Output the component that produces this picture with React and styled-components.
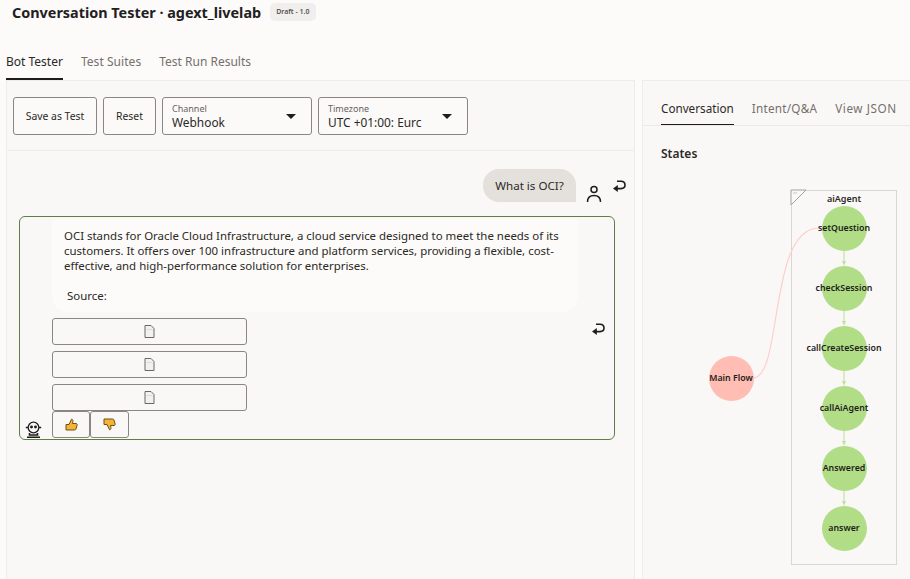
import React from "react";
import styled, { createGlobalStyle } from "styled-components";

const GlobalStyle = createGlobalStyle`
    html, body {
        margin: 0;
        padding: 0;
        background: #fcfbfa;
        font-family: "Noto Sans", "Liberation Sans", sans-serif;
        color: #2b2926;
    }
`;

const Page = styled.div`
    width: 910px;
    height: 579px;
    overflow: hidden;
    display: flex;
    flex-direction: column;
`;

const Header = styled.header`
    height: 24px;
    padding-left: 12px;
    display: flex;
    align-items: center;
    gap: 9px;
`;

const Title = styled.h1`
    margin: 0;
    font-size: 14.4px;
    font-weight: 700;
    color: #22201d;
`;

const Badge = styled.span`
    padding: 0 6px;
    height: 18px;
    line-height: 18px;
    border-radius: 5px;
    background: #f1efed;
    font-size: 7px;
    font-weight: 600;
    color: #57534e;
`;

const TabBar = styled.nav`
    display: flex;
    gap: 18px;
    height: ${(p) => p.$height}px;
    padding-left: ${(p) => p.$left}px;
    margin-top: ${(p) => p.$top || 0}px;
    align-items: flex-end;
    border-bottom: ${(p) => (p.$ruled ? "1px solid #ebe9e6" : "none")};
`;

const Tab = styled.div`
    padding-bottom: 8px;
    font-size: ${(p) => p.$size}px;
    letter-spacing: ${(p) => p.$spacing || 0}px;
    line-height: 16px;
    color: ${(p) => (p.$active ? "#2b2926" : "#74706b")};
    border-bottom: ${(p) => p.$line}px solid ${(p) => (p.$active ? "#1f1d1b" : "transparent")};
`;

const Main = styled.main`
    flex: 1;
    display: flex;
    gap: 7px;
    padding-left: 6px;
    min-height: 0;
`;

const TesterPanel = styled.section`
    width: 629px;
    background: #f9f8f6;
    border: 1px solid #efedea;
    border-bottom: none;
    box-sizing: border-box;
    display: flex;
    flex-direction: column;
`;

const Toolbar = styled.div`
    height: 70px;
    box-sizing: border-box;
    padding: 16px 6px 0;
    display: flex;
    gap: 6px;
    border-bottom: 1px solid #efedea;
`;

const Button = styled.button`
    width: ${(p) => p.$width}px;
    height: 38px;
    padding: 0;
    background: #fbfaf8;
    border: 1px solid #8a8782;
    border-radius: 3px;
    font-family: inherit;
    font-size: 10.4px;
    color: #2b2926;
`;

const Select = styled.div`
    width: ${(p) => p.$width}px;
    height: 38px;
    box-sizing: border-box;
    padding: 5px 15px 0 9px;
    background: #fbfaf8;
    border: 1px solid #8a8782;
    border-radius: 3px;
    display: flex;
    justify-content: space-between;
    overflow: hidden;
`;

const SelectText = styled.div`
    display: flex;
    flex-direction: column;
`;

const SelectLabel = styled.span`
    font-size: 9px;
    line-height: 12px;
    color: #66625d;
`;

const SelectValue = styled.span`
    font-size: 11.9px;
    line-height: 14px;
`;

const Caret = styled.span`
    width: 0;
    height: 0;
    margin-top: 11px;
    border-left: 5px solid transparent;
    border-right: 5px solid transparent;
    border-top: 5px solid #1f1d1b;
`;

const Chat = styled.div`
    padding: 18px 8px 0 12px;
    display: flex;
    flex-direction: column;
    gap: 14px;
`;

const UserRow = styled.div`
    height: 33px;
    display: flex;
    justify-content: flex-end;
    align-items: flex-start;
`;

const UserBubble = styled.div`
    width: 93px;
    height: 33px;
    box-sizing: border-box;
    text-align: center;
    background: #e4e1dc;
    border-radius: 16px 16px 0 16px;
    font-size: 11.6px;
    line-height: 33px;
`;

const UserIcon = styled.svg`
    width: 16px;
    height: 18px;
    margin: 16px 0 0 10px;
`;

const ReturnIcon = styled.svg`
    width: 14px;
    height: 14px;
    flex: none;
    margin: ${(p) => p.$margin};
`;

const BotCard = styled.div`
    width: 596px;
    height: 224px;
    box-sizing: border-box;
    border: 1px solid #5c7f43;
    border-radius: 6px;
    padding: 2px 0 0 32px;
    display: flex;
    position: relative;
`;

const BotColumn = styled.div`
    width: 526px;
    flex: none;
`;

const BotBubble = styled.div`
    height: 93px;
    box-sizing: border-box;
    padding: 9px 12px 0;
    background: #fcfbf9;
    border-radius: 0 0 16px 16px;
    font-size: 11.45px;
    line-height: 15px;
`;

const Source = styled.p`
    margin: 15px 0 0 3px;
`;

const DocList = styled.div`
    margin-top: 6px;
    display: flex;
    flex-direction: column;
    gap: 6px;
`;

const DocButton = styled.div`
    width: 195px;
    height: 27px;
    box-sizing: border-box;
    display: flex;
    align-items: center;
    justify-content: center;
    background: #f9f8f6;
    border: 1px solid #8a8782;
    border-radius: 3px;
`;

const Feedback = styled.div`
    display: flex;
`;

const ThumbButton = styled.div`
    width: ${(p) => p.$width}px;
    height: 27px;
    box-sizing: border-box;
    display: flex;
    align-items: center;
    justify-content: center;
    border: 1px solid #8a8782;
    border-radius: 3px;
`;

const ThumbIcon = styled.svg`
    width: 13px;
    height: 13px;
    transform: ${(p) => (p.$down ? "scaleY(-1)" : "none")};
`;

const BotAvatar = styled.svg`
    position: absolute;
    left: 5px;
    bottom: 1px;
    width: 17px;
    height: 17px;
`;

const SidePanel = styled.aside`
    flex: 1;
    background: #faf8f7;
    border-left: 1px solid #efedea;
    border-top: 1px solid #efedea;
    display: flex;
    flex-direction: column;
`;

const SectionTitle = styled.h2`
    margin: 20px 0 1px 18px;
    font-size: 12px;
    line-height: 16px;
    font-weight: 600;
`;

const Canvas = styled.div`
    position: relative;
    flex: 1;
`;

const Edges = styled.svg`
    position: absolute;
    inset: 0;
    width: 100%;
    height: 100%;
`;

const Group = styled.div`
    position: absolute;
    left: 148px;
    top: 27px;
    width: 106px;
    height: 375px;
    box-sizing: border-box;
    border: 1px solid #d9d7d5;
`;

const GroupName = styled.span`
    position: absolute;
    top: 1px;
    left: 0;
    right: 0;
    text-align: center;
    font-size: 9px;
    line-height: 14px;
    font-weight: 600;
`;

const Node = styled.div`
    position: absolute;
    left: ${(p) => p.$x - 22.5}px;
    top: ${(p) => p.$y - 22.5}px;
    width: 45px;
    height: 45px;
    border-radius: 50%;
    background: ${(p) => p.$color};
    display: flex;
    align-items: center;
    justify-content: center;
    white-space: nowrap;
    font-size: 8.8px;
    font-weight: 600;
    color: #1f1d1b;
`;

const states = [
    { name: "setQuestion", y: 65 },
    { name: "checkSession", y: 125 },
    { name: "callCreateSession", y: 185 },
    { name: "callAiAgent", y: 245 },
    { name: "Answered", y: 305 },
    { name: "answer", y: 365 },
];

const ReturnGlyph = ({ margin }) => (
    <ReturnIcon $margin={margin} viewBox="0 0 14 14" fill="none" stroke="#1f1d1b" strokeWidth="1.6">
        <path d="M5 2.2 H9 C11.6 2.2 13 4 13 6 C13 8.2 11.4 9.6 9 9.6 H3" />
        <path d="M5.8 6 L1 9.6 L5.8 13 Z" fill="#1f1d1b" stroke="none" />
    </ReturnIcon>
);

const DocIcon = () => (
    <svg width="11" height="13" viewBox="0 0 11 13" fill="#f3f1ee" stroke="#6b6864" strokeWidth="1">
        <path d="M1 .5 H7 L10 3.5 V12.5 H1 Z" />
        <path d="M2.5 4.5 H8.5" stroke="#dcdad6" />
    </svg>
);

const Thumb = ({ down }) => (
    <ThumbIcon $down={down} viewBox="0 0 13 13" fill="#f5b335" stroke="#6b5216" strokeWidth="1">
        <path d="M1 6.5 H4 L6.5 1.2 C7.6 1.2 8.2 2.3 7.9 3.4 L7.5 5.5 H11 C12 5.5 12.4 6.3 12.1 7.2 L10.9 11.2 C10.7 11.8 10.1 12 9.6 12 H1 Z" />
    </ThumbIcon>
);

const App = () => (
    <Page>
        <GlobalStyle />
        <Header>
            <Title>Conversation Tester · agext_livelab</Title>
            <Badge>Draft - 1.0</Badge>
        </Header>
        <TabBar $height={30} $left={6} $top={26}>
            <Tab $active $size={12} $line={2}>Bot Tester</Tab>
            <Tab $size={12} $spacing={0.05} $line={2}>Test Suites</Tab>
            <Tab $size={12} $line={2}>Test Run Results</Tab>
        </TabBar>
        <Main>
            <TesterPanel>
                <Toolbar>
                    <Button $width={84}>Save as Test</Button>
                    <Button $width={53}>Reset</Button>
                    <Select $width={150}>
                        <SelectText>
                            <SelectLabel>Channel</SelectLabel>
                            <SelectValue>Webhook</SelectValue>
                        </SelectText>
                        <Caret />
                    </Select>
                    <Select $width={150}>
                        <SelectText>
                            <SelectLabel>Timezone</SelectLabel>
                            <SelectValue>UTC +01:00: Eurc</SelectValue>
                        </SelectText>
                        <Caret />
                    </Select>
                </Toolbar>
                <Chat>
                    <UserRow>
                        <UserBubble>What is OCI?</UserBubble>
                        <UserIcon viewBox="0 0 16 18" fill="none" stroke="#1f1d1b" strokeWidth="1.5">
                            <circle cx="8" cy="4.5" r="3" />
                            <path d="M1.5 17 C1.5 13 4 10.5 8 10.5 C12 10.5 14.5 13 14.5 17" />
                        </UserIcon>
                        <ReturnGlyph margin="10px 0 0 10px" />
                    </UserRow>
                    <BotCard>
                        <BotColumn>
                            <BotBubble>
                                OCI stands for Oracle Cloud Infrastructure, a cloud service designed to meet the needs of its
                                customers. It offers over 100 infrastructure and platform services, providing a flexible, cost-effective, and high-performance solution for enterprises.
                                <Source>Source:</Source>
                            </BotBubble>
                            <DocList>
                                <DocButton><DocIcon /></DocButton>
                                <DocButton><DocIcon /></DocButton>
                                <DocButton><DocIcon /></DocButton>
                            </DocList>
                            <Feedback>
                                <ThumbButton $width={38}><Thumb /></ThumbButton>
                                <ThumbButton $width={39}><Thumb down /></ThumbButton>
                            </Feedback>
                        </BotColumn>
                        <ReturnGlyph margin="103px 0 0 13px" />
                        <BotAvatar viewBox="0 0 17 17" fill="none" stroke="#1f1d1b" strokeWidth="1.3">
                            <circle cx="8.5" cy="6.5" r="5.3" />
                            <path d="M.8 6.5 H3 M14 6.5 H16.2" />
                            <circle cx="6.5" cy="6" r=".8" fill="#1f1d1b" />
                            <circle cx="10.5" cy="6" r=".8" fill="#1f1d1b" />
                            <path d="M4.5 12 V14 H12.5 V12 M2 16.2 H15" strokeWidth="1.6" />
                        </BotAvatar>
                    </BotCard>
                </Chat>
            </TesterPanel>
            <SidePanel>
                <TabBar $height={44} $left={18} $ruled>
                    <Tab $active $size={11.7} $line={1}>Conversation</Tab>
                    <Tab $size={11.7} $spacing={0.25} $line={1}>Intent/Q&amp;A</Tab>
                    <Tab $size={11.7} $spacing={0.6} $line={1}>View JSON</Tab>
                </TabBar>
                <SectionTitle>States</SectionTitle>
                <Canvas>
                    <Group>
                        <GroupName>aiAgent</GroupName>
                    </Group>
                    <Edges fill="none">
                        <path d="M148 42 V27 H163 L148 42 Z" fill="#faf8f7" stroke="#a5a3a0" strokeWidth="1" />
                        <path d="M150 30 H154" stroke="#c9c7c4" strokeWidth="1" />
                        <path d="M110 215 C140 215 125 65 176 65" stroke="#fdcfc8" strokeWidth="1.2" />
                        {states.slice(0, -1).map((s) => (
                            <g key={s.name} stroke="#d9ecc5">
                                <path d={`M201 ${s.y + 22} V${s.y + 35}`} strokeWidth="2" />
                                <path d={`M199 ${s.y + 33} L201 ${s.y + 38} L203 ${s.y + 33} Z`} fill="#c2e0a0" stroke="none" />
                            </g>
                        ))}
                    </Edges>
                    <Node $x={88} $y={215} $color="#ffbdb3">Main Flow</Node>
                    {states.map((s) => (
                        <Node key={s.name} $x={201} $y={s.y} $color="#b1dd86">{s.name}</Node>
                    ))}
                </Canvas>
            </SidePanel>
        </Main>
    </Page>
);

export default App;
